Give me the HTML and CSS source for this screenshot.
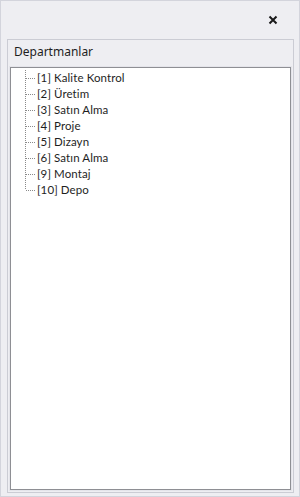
FILE: index.html
```html
<!DOCTYPE HTML>
<html>
<head>
<link rel="stylesheet" href="styles.css">
<meta charset='utf-8'>
<title>Departmanlar</title>
</head>
<body>
  <div class="pencere">
    <div class="baslik">
      <svg class="kapat" width="10" height="10" viewBox="0 0 10 10">
        <path d="M1.5 1.5 L8.5 8.5 M8.5 1.5 L1.5 8.5" stroke="#1a1a1a" stroke-width="2" fill="none"/>
      </svg>
    </div>
    <div class="grup">
      <div class="grup-baslik">Departmanlar</div>
      <div class="agac">
        <ul class="liste">
          <li>[1] Kalite Kontrol</li>
          <li>[2] Üretim</li>
          <li>[3] Satın Alma</li>
          <li>[4] Proje</li>
          <li>[5] Dizayn</li>
          <li>[6] Satın Alma</li>
          <li>[9] Montaj</li>
          <li>[10] Depo</li>
        </ul>
      </div>
    </div>
  </div>
</body>
</html>
```

FILE: styles.css
```css
html,body{
  margin: 0;
  padding: 0;
  background: #eeeef2;
  font-family: "Noto Sans", "Open Sans", sans-serif;
  font-size: 12px;
  color: #1e1e1e;
}
.pencere{
  box-sizing: border-box;
  width: 300px;
  height: 497px;
  border: 1px solid #d3d4dc;
  display: flex;
  flex-direction: column;
}
.baslik{
  height: 38px;
  display: flex;
  justify-content: flex-end;
  align-items: center;
  padding-right: 21px;
}
.kapat{
  display: block;
  margin-top: -1px;
}
.grup{
  flex: 1;
  margin: 0 5px 3px 6px;
  border: 1px solid #cbccd4;
  display: flex;
  flex-direction: column;
}
.grup-baslik{
  height: 27px;
  line-height: 24px;
  padding-left: 6px;
}
.agac{
  flex: 1;
  margin: 0 2px 2px 2px;
  background: #fff;
  border: 1px solid #8e8f94;
  box-shadow: 0 0 0 1px #e4e4ea;
}
.liste{
  list-style: none;
  margin: 2px 0 0 14px;
  padding: 0;
  position: relative;
  font-family: "Lato", "Noto Sans", sans-serif;
  font-size: 11.5px;
  letter-spacing: 0.1px;
}
.liste::before{
  content: "";
  position: absolute;
  left: 0;
  top: 0;
  height: 119px;
  border-left: 1px dotted #8a8a8a;
}
.liste li{
  height: 16px;
  line-height: 16px;
  padding-left: 12px;
  position: relative;
  white-space: nowrap;
}
.liste li::before{
  content: "";
  position: absolute;
  left: 1px;
  top: 8px;
  width: 9px;
  border-top: 1px dotted #8a8a8a;
}
```
